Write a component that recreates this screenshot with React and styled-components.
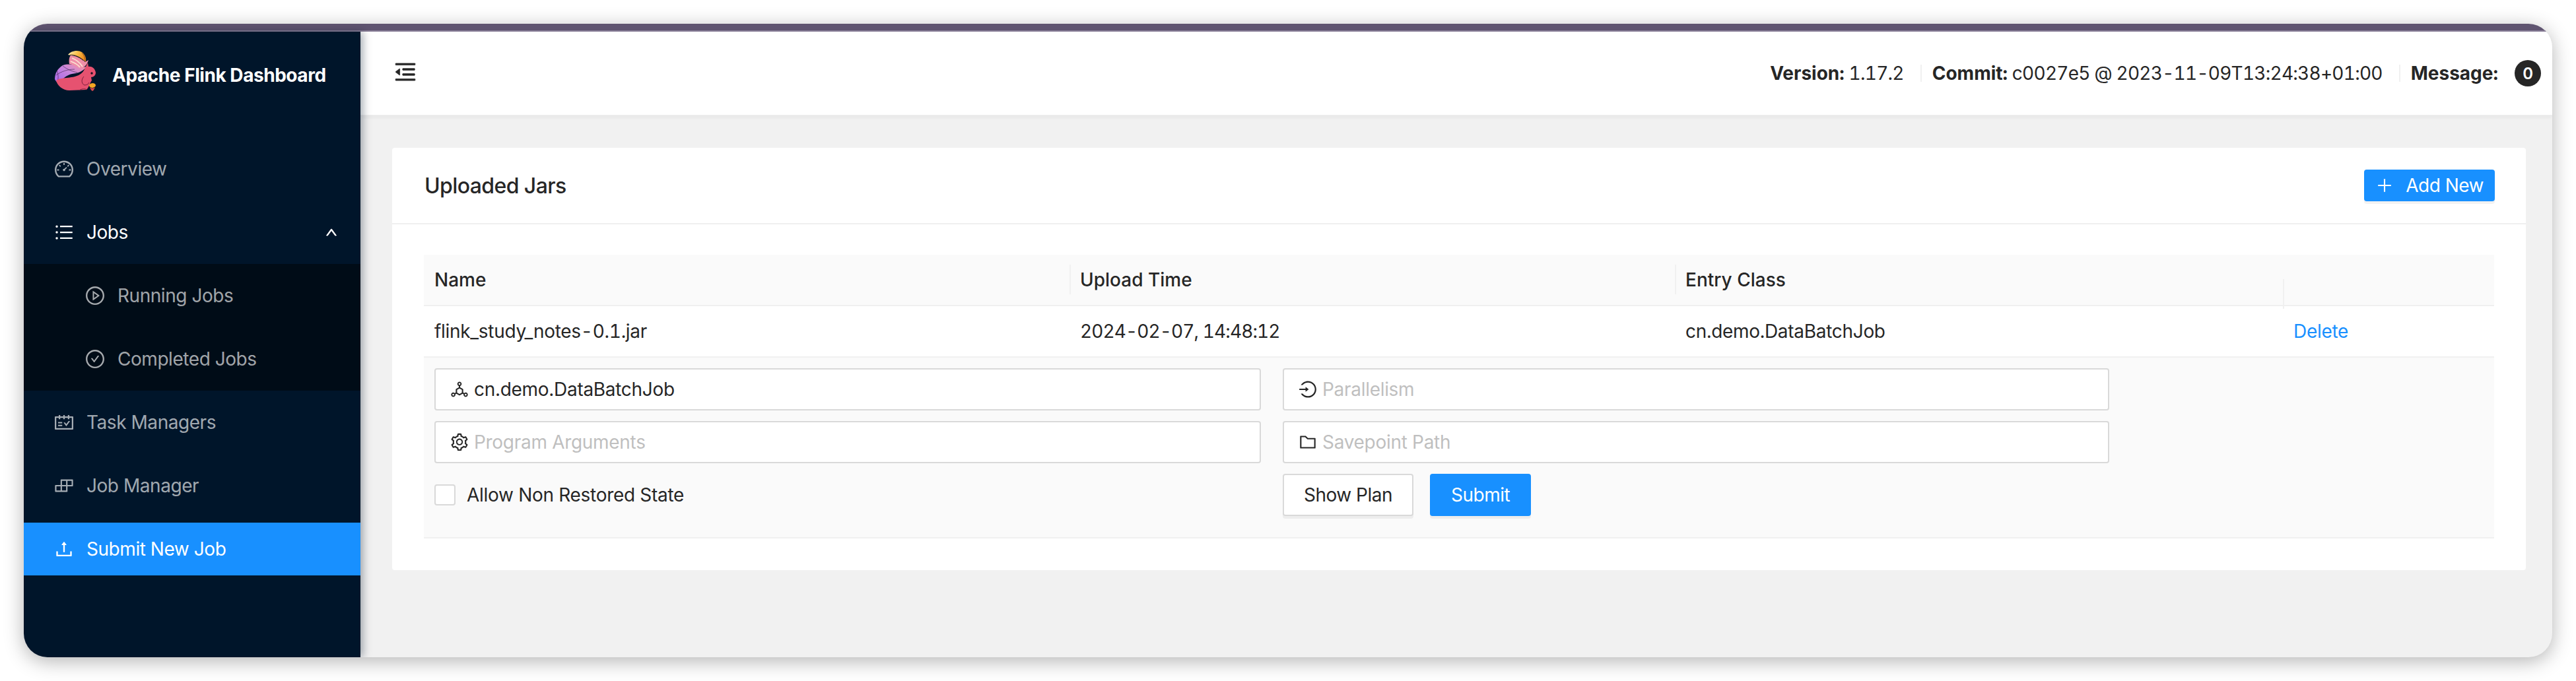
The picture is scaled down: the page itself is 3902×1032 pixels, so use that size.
import { createGlobalStyle, styled } from "styled-components";
import {
  AiOutlineBars,
  AiOutlineBuild,
  AiOutlineCheckCircle,
  AiOutlineDashboard,
  AiOutlineDeploymentUnit,
  AiOutlineFolder,
  AiOutlineLogin,
  AiOutlineMenuFold,
  AiOutlinePlayCircle,
  AiOutlinePlus,
  AiOutlineSchedule,
  AiOutlineSetting,
  AiOutlineUp,
  AiOutlineUpload,
} from "react-icons/ai";

const GlobalStyle = createGlobalStyle`
  html, body {
    margin: 0;
    background: #fff;
  }
  body {
    font-family: Inter, "Liberation Sans", sans-serif;
    font-size: 28px;
    letter-spacing: -0.3px;
    color: #262626;
  }
  * {
    box-sizing: border-box;
  }
`;

const Page = styled.div`
  width: 3902px;
  height: 1032px;
  padding: 36px;
  overflow: hidden;
`;

const Window = styled.div`
  width: 3830px;
  height: 960px;
  display: flex;
  flex-direction: column;
  border-radius: 36px;
  overflow: hidden;
  background: #f1f1f1;
  box-shadow: 0 6px 30px rgba(0, 0, 0, 0.3);
`;

const TitleBar = styled.div`
  height: 12px;
  flex: none;
  background: #5f5470;
  border-bottom: 2px solid #8a7f98;
`;

const Body = styled.div`
  flex: 1;
  display: flex;
  min-height: 0;
`;

const Sidebar = styled.aside`
  width: 510px;
  flex: none;
  background: #00152a;
  box-shadow: 4px 0 12px rgba(0, 21, 41, 0.35);
  position: relative;
  z-index: 2;
`;

const Brand = styled.div`
  height: 128px;
  display: flex;
  align-items: center;
  padding: 4px 0 0 39px;
  gap: 15px;
  svg {
    margin-bottom: 13px;
  }
`;

const BrandName = styled.span`
  color: #fff;
  font-size: 28px;
  font-weight: 700;
  letter-spacing: -0.45px;
  white-space: nowrap;
`;

const Menu = styled.nav`
  padding-top: 40px;
  display: flex;
  flex-direction: column;
  gap: 16px;
`;

const MenuItem = styled.div`
  height: 80px;
  display: flex;
  align-items: center;
  gap: 18px;
  padding-left: ${(p) => (p.$sub ? "92px" : "45px")};
  padding-right: 34px;
  letter-spacing: -0.45px;
  color: ${(p) => (p.$active || p.$open ? "#fff" : "rgba(255, 255, 255, 0.65)")};
  background: ${(p) => (p.$active ? "#1890ff" : "transparent")};
  white-space: nowrap;
  svg {
    flex: none;
    font-size: 32px;
  }
`;

const Chevron = styled(AiOutlineUp)`
  margin-left: auto;
  stroke: currentColor;
  stroke-width: 50;
  && {
    font-size: 20px;
  }
`;

const SubMenu = styled.div`
  margin: -8px 0;
  padding: 8px 0;
  display: flex;
  flex-direction: column;
  gap: 16px;
  background: #000c17;
`;

const Main = styled.div`
  flex: 1;
  min-width: 0;
  display: flex;
  flex-direction: column;
`;

const Header = styled.header`
  height: 126px;
  flex: none;
  display: flex;
  align-items: center;
  background: #fff;
  padding: 0 17px 0 49px;
  box-shadow: 0 2px 0 #ececec, 0 4px 6px rgba(0, 21, 41, 0.05);
  position: relative;
  z-index: 1;
  > svg {
    font-size: 38px;
    color: #262626;
    margin-bottom: 4px;
    stroke: currentColor;
    stroke-width: 20;
  }
`;

const StatusList = styled.div`
  margin-left: auto;
  display: flex;
  align-items: center;
`;

const Status = styled.div`
  padding: 0 25px 0 16px;
  line-height: 26px;
  letter-spacing: -0.75px;
  font-variant-numeric: tabular-nums;
  white-space: nowrap;
  & + & {
    border-left: 2px solid #f0f0f0;
  }
  b {
    font-weight: 700;
    letter-spacing: 0;
  }
`;

const Badge = styled.span`
  width: 40px;
  height: 40px;
  border-radius: 50%;
  background: #262626;
  color: #fff;
  font-size: 24px;
  font-weight: 600;
  display: flex;
  align-items: center;
  justify-content: center;
`;

const Content = styled.main`
  padding: 50px 40px 0 48px;
`;

const Card = styled.section`
  background: #fff;
  border-radius: 4px;
  padding-bottom: 48px;
`;

const CardHead = styled.div`
  height: 116px;
  display: flex;
  align-items: center;
  justify-content: space-between;
  padding: 0 47px 0 49px;
  border-bottom: 2px solid #f0f0f0;
`;

const CardTitle = styled.h2`
  margin: 0;
  font-size: 32px;
  font-weight: 500;
  letter-spacing: -0.6px;
`;

const Button = styled.button`
  height: ${(p) => (p.$small ? "48px" : "64px")};
  padding: ${(p) => (p.$small ? "0 15px" : "0 30px")};
  display: inline-flex;
  align-items: center;
  gap: 18px;
  font: inherit;
  letter-spacing: -0.5px;
  white-space: nowrap;
  border-radius: 4px;
  border: 2px solid ${(p) => (p.$primary ? "#1890ff" : "#d9d9d9")};
  background: ${(p) => (p.$primary ? "#1890ff" : "#fff")};
  color: ${(p) => (p.$primary ? "#fff" : "#262626")};
  box-shadow: 0 4px 0 rgba(0, 0, 0, 0.05);
  svg {
    font-size: 28px;
  }
`;

const Table = styled.div`
  margin: 46px 48px 0 48px;
`;

const Row = styled.div`
  display: grid;
  grid-template-columns: 978px 917px 921px 1fr;
  height: 78px;
  align-items: center;
  border-bottom: 2px solid #f0f0f0;
  background: ${(p) => (p.$head ? "#fafafa" : "#fff")};
  font-weight: ${(p) => (p.$head ? 500 : 400)};
  letter-spacing: ${(p) => (p.$head ? "0" : "-0.3px")};
  font-variant-numeric: tabular-nums;
`;

const Cell = styled.div`
  padding: 0 16px;
  line-height: 44px;
  white-space: nowrap;
  position: relative;
  &::before {
    content: "";
    display: ${(p) => (p.$divided ? "block" : "none")};
    position: absolute;
    left: 0;
    top: -1px;
    width: 2px;
    height: 45px;
    background: #f0f0f0;
  }
`;

const Stamp = styled.span`
  letter-spacing: -0.9px;
`;

const DeleteLink = styled.span`
  color: #1890ff;
`;

const Expanded = styled.div`
  display: grid;
  grid-template-columns: 1252px 1252px;
  grid-auto-rows: 64px;
  gap: 16px 33px;
  padding: 16px 16px 32px;
  background: #fafafa;
  border-bottom: 2px solid #f0f0f0;
`;

const Field = styled.div`
  display: flex;
  align-items: center;
  gap: 7px;
  padding: 0 21px;
  background: #fff;
  border: 2px solid #d9d9d9;
  border-radius: 4px;
  color: ${(p) => (p.$filled ? "#262626" : "#bfbfbf")};
  svg {
    font-size: 30px;
    color: #262626;
  }
`;

const CheckRow = styled.div`
  display: flex;
  align-items: center;
  gap: 17px;
`;

const CheckBox = styled.span`
  width: 32px;
  height: 32px;
  background: #fff;
  border: 2px solid #d9d9d9;
  border-radius: 4px;
`;

const Actions = styled.div`
  display: flex;
  gap: 25px;
`;

// the flink squirrel, drawn by hand, 1 unit = 1 px of the shot
const Logo = () => (
  <svg width="80" height="75" viewBox="0 0 80 75">
    <defs>
      <linearGradient id="tailTop" x1="0" y1="0" x2="1" y2="0.3">
        <stop offset="0" stopColor="#fdeeb8" />
        <stop offset="0.55" stopColor="#f9c04a" />
        <stop offset="1" stopColor="#ee8a1c" />
      </linearGradient>
      <linearGradient id="tailMid" x1="0" y1="1" x2="1" y2="0.2">
        <stop offset="0" stopColor="#a765ea" />
        <stop offset="0.6" stopColor="#c987dc" />
        <stop offset="1" stopColor="#f08fa6" />
      </linearGradient>
    </defs>
    <path d="M8 50C8 41 12 34 20 29 28 26 40 28 50 32L56 31C50 39 42 41 34 42 26 44 20 48 17 56 13 57 10 54 8 50Z" fill="url(#tailMid)" />
    <path d="M30 27C29 21 30 16 32 14 38 14 48 18 54 24L59 21C57 28 53 32 48 34 41 31 36 28 30 27Z" fill="#ef8fa8" />
    <path d="M34 18C40 20 46 25 50 31M32 23C38 25 43 28 46 32" stroke="#fbe3d2" strokeWidth="1.6" fill="none" />
    <path d="M28 13C32 7 43 5 49 9 54 13 56 18 55 24 50 19 44 15 38 14 34 13 31 14 28 13Z" fill="url(#tailTop)" />
    <path d="M49 10C53 14 54 19 54 23M31 13C38 12 45 16 51 22" stroke="#4a2a12" strokeWidth="0.8" fill="none" opacity="0.7" />
    <path d="M11 36C13 42 14 48 12 53M20 30C27 35 33 38 42 40M10 44C18 38 28 35 38 35" stroke="#2b1638" strokeWidth="0.9" fill="none" opacity="0.6" />
    <path d="M10 52C16 47 34 49 44 44 50 41 52 37 54 33L58 25 59 31C63 30 69 33 70 40 70 44 67 47 63 47L64 52C61 56 60 62 56 66L30 67C20 67 12 60 10 52Z" fill="#e65270" />
    <path d="M52 46C48 50 48 57 53 59 57 59 59 57 60 55" fill="none" stroke="#7c1f3c" strokeWidth="1" />
    <path d="M45 67C49 64 54 64 57 66" fill="none" stroke="#7c1f3c" strokeWidth="0.9" />
    <circle cx="64" cy="41" r="1.7" fill="#1a1020" />
    <path d="M60 59C62 55 69 55 70 59 70 62 66 63 65 63 63 63 60 62 60 59Z" fill="#f7a823" />
    <path d="M61 62C63 64 68 64 69 62 68 65 66 68 65 68 63 67 62 65 61 62Z" fill="#d94a4e" />
  </svg>
);

const App = () => {
  return (
    <>
      <GlobalStyle />
      <Page>
        <Window>
          <TitleBar />
          <Body>
            <Sidebar>
              <Brand>
                <Logo />
                <BrandName>Apache Flink Dashboard</BrandName>
              </Brand>
              <Menu>
                <MenuItem><AiOutlineDashboard />Overview</MenuItem>
                <MenuItem $open><AiOutlineBars />Jobs<Chevron /></MenuItem>
                <SubMenu>
                  <MenuItem $sub><AiOutlinePlayCircle />Running Jobs</MenuItem>
                  <MenuItem $sub><AiOutlineCheckCircle />Completed Jobs</MenuItem>
                </SubMenu>
                <MenuItem><AiOutlineSchedule />Task Managers</MenuItem>
                <MenuItem><AiOutlineBuild />Job Manager</MenuItem>
                <MenuItem $active><AiOutlineUpload />Submit New Job</MenuItem>
              </Menu>
            </Sidebar>
            <Main>
              <Header>
                <AiOutlineMenuFold />
                <StatusList>
                  <Status><b>Version:</b> 1.17.2</Status>
                  <Status><b>Commit:</b> c0027e5 @ 2023-11-09T13:24:38+01:00</Status>
                  <Status><b>Message:</b></Status>
                  <Badge>0</Badge>
                </StatusList>
              </Header>
              <Content>
                <Card>
                  <CardHead>
                    <CardTitle>Uploaded Jars</CardTitle>
                    <Button $primary $small><AiOutlinePlus />Add New</Button>
                  </CardHead>
                  <Table>
                    <Row $head>
                      <Cell>Name</Cell>
                      <Cell $divided>Upload Time</Cell>
                      <Cell $divided>Entry Class</Cell>
                      <Cell $divided />
                    </Row>
                    <Row>
                      <Cell>flink_study_notes-0.1.jar</Cell>
                      <Cell><Stamp>2024-02-07, 14:48:12</Stamp></Cell>
                      <Cell>cn.demo.DataBatchJob</Cell>
                      <Cell><DeleteLink>Delete</DeleteLink></Cell>
                    </Row>
                    <Expanded>
                      <Field $filled><AiOutlineDeploymentUnit /><span>cn.demo.DataBatchJob</span></Field>
                      <Field><AiOutlineLogin /><span>Parallelism</span></Field>
                      <Field><AiOutlineSetting /><span>Program Arguments</span></Field>
                      <Field><AiOutlineFolder /><span>Savepoint Path</span></Field>
                      <CheckRow><CheckBox /><span>Allow Non Restored State</span></CheckRow>
                      <Actions>
                        <Button>Show Plan</Button>
                        <Button $primary>Submit</Button>
                      </Actions>
                    </Expanded>
                  </Table>
                </Card>
              </Content>
            </Main>
          </Body>
        </Window>
      </Page>
    </>
  );
};

export default App;
